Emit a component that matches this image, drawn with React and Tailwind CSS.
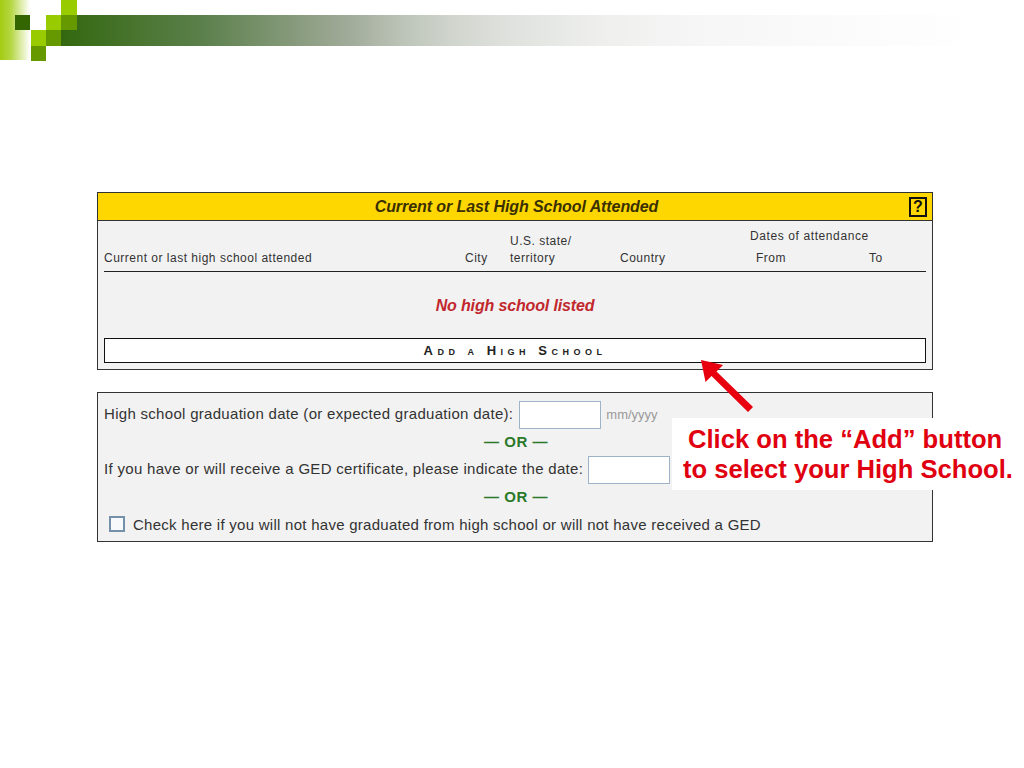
export default function App() {
  return (
    <div className="relative w-[1024px] h-[768px] bg-white overflow-hidden font-['Liberation_Sans',Arial,sans-serif]">
      <svg width="1024" height="61" viewBox="0 0 1024 61" className="block" aria-hidden="true">
        <defs>
          <linearGradient id="side" x1="0" x2="1" y1="0" y2="0">
            <stop offset="0" stopColor="#a4cc12" />
            <stop offset="0.35" stopColor="#b4d640" />
            <stop offset="1" stopColor="#ffffff" />
          </linearGradient>
          <linearGradient id="bar" gradientUnits="userSpaceOnUse" x1="61" x2="985" y1="0" y2="0">
            <stop offset="0" stopColor="#33680f" />
            <stop offset="0.15" stopColor="#5a7f4a" />
            <stop offset="0.31" stopColor="#a0aa98" />
            <stop offset="0.37" stopColor="#bcc4b8" />
            <stop offset="0.42" stopColor="#cfd4cc" />
            <stop offset="0.47" stopColor="#dcdfda" />
            <stop offset="0.58" stopColor="#eeefed" />
            <stop offset="0.69" stopColor="#f6f6f6" />
            <stop offset="0.85" stopColor="#fbfbfb" />
            <stop offset="1" stopColor="#ffffff" />
          </linearGradient>
        </defs>
        <rect x="0" y="0" width="30" height="60" fill="url(#side)" />
        <rect x="77" y="15" width="908" height="15" fill="url(#bar)" />
        <rect x="61" y="30" width="924" height="16" fill="url(#bar)" />
        <rect x="15" y="15" width="15" height="15" fill="#336600" />
        <rect x="61" y="0" width="16" height="15" fill="#99cc00" />
        <rect x="46" y="15" width="15" height="15" fill="#99cc00" />
        <rect x="61" y="15" width="16" height="15" fill="#669900" />
        <rect x="31" y="30" width="15" height="16" fill="#99cc00" />
        <rect x="46" y="30" width="15" height="16" fill="#669900" />
        <rect x="31" y="46" width="15" height="15" fill="#669900" />
      </svg>

      <div className="ml-[97px] mt-[131px] w-[836px] flex flex-col gap-[22px] text-[#333]">
        <section className="border border-[#333] bg-[#f2f2f2] h-[178px] flex flex-col">
          <div className="h-[28px] shrink-0 bg-[#ffd700] border-b border-[#333] flex items-center relative">
            <h2 className="w-full text-center text-[16px] tracking-[-0.08px] pl-[3px] font-bold italic text-[#3a3000] leading-none">
              Current or Last High School Attended
            </h2>
            <span className="absolute right-[5px] top-[4px] w-[18px] h-[20px] border-2 border-[#111] flex items-center justify-center text-[16px] font-bold text-[#111] leading-none">
              ?
            </span>
          </div>
          <div className="px-[6px] flex flex-col flex-1">
            <div className="h-[51px] border-b border-[#222] grid grid-cols-[361px_45px_110px_130px_119px_1fr] items-end pb-[4px] text-[12px] leading-[17px] tracking-[0.5px] shrink-0">
              <span>Current or last high school attended</span>
              <span>City</span>
              <span>
                U.S. state/
                <br />
                territory
              </span>
              <span>Country</span>
              <span className="flex flex-col">
                <span className="whitespace-nowrap mb-[5px] tracking-[0.6px]">Dates of attendance</span>
                <span className="pl-[6px]">From</span>
              </span>
              <span>To</span>
            </div>
            <p className="h-[66px] pt-[2px] flex items-center justify-center text-[16px] tracking-[-0.15px] font-bold italic text-[#c1272d] shrink-0">
              No high school listed
            </p>
            <button className="h-[25px] w-full bg-white border border-[#111] flex items-center justify-center text-[13px] font-bold text-[#222] tracking-[4.5px] [font-variant:small-caps]">
              Add a High School
            </button>
          </div>
        </section>

        <section className="border border-[#333] bg-[#f2f2f2] h-[150px] px-[6px] pt-[7px] text-[15px] tracking-[0.3px] flex flex-col">
          <div className="h-[29px] flex items-center shrink-0">
            <span>High school graduation date (or expected graduation date):</span>
            <span className="ml-[6px] w-[82px] h-[28px] bg-white border border-[#9fb3c8] shrink-0" />
            <span className="ml-[5px] text-[13px] text-[#999] tracking-normal">mm/yyyy</span>
          </div>
          <div className="h-[26px] flex items-center justify-center font-bold text-[#2a7a2a] pl-[2px] tracking-[0.5px] shrink-0">
            — OR —
          </div>
          <div className="h-[29px] flex items-center shrink-0 tracking-[0.31px]">
            <span>If you have or will receive a GED certificate, please indicate the date:</span>
            <span className="ml-[5px] w-[82px] h-[28px] bg-white border border-[#9fb3c8] shrink-0" />
          </div>
          <div className="h-[26px] flex items-center justify-center font-bold text-[#2a7a2a] pl-[2px] tracking-[0.5px] shrink-0">
            — OR —
          </div>
          <div className="h-[29px] flex items-center pl-[5px] shrink-0">
            <span className="w-[16px] h-[16px] mb-[2px] border-2 border-[#7490ab] bg-[#f7f9fb] shrink-0" />
            <span className="ml-[8px] mt-[2px] tracking-[0.27px]">
              Check here if you will not have graduated from high school or will not have received a GED
            </span>
          </div>
        </section>
      </div>

      <svg width="64" height="60" viewBox="0 0 64 60" className="absolute left-[696px] top-[355px]" aria-hidden="true">
        <path d="M5 5 L27 10 L20.5 16.5 L57 52 L52 57 L15.5 21 L9.5 27 Z" fill="#e8000f" />
      </svg>

      <div className="absolute left-[672px] top-[418px] w-[352px] h-[72px] bg-white flex flex-col justify-center text-[25.6px] leading-[30px] font-bold text-[#e00010]">
        <span className="whitespace-nowrap pl-[16px]">Click on the “Add” button</span>
        <span className="whitespace-nowrap pl-[11px]">to select your High School.</span>
      </div>
    </div>
  );
}
